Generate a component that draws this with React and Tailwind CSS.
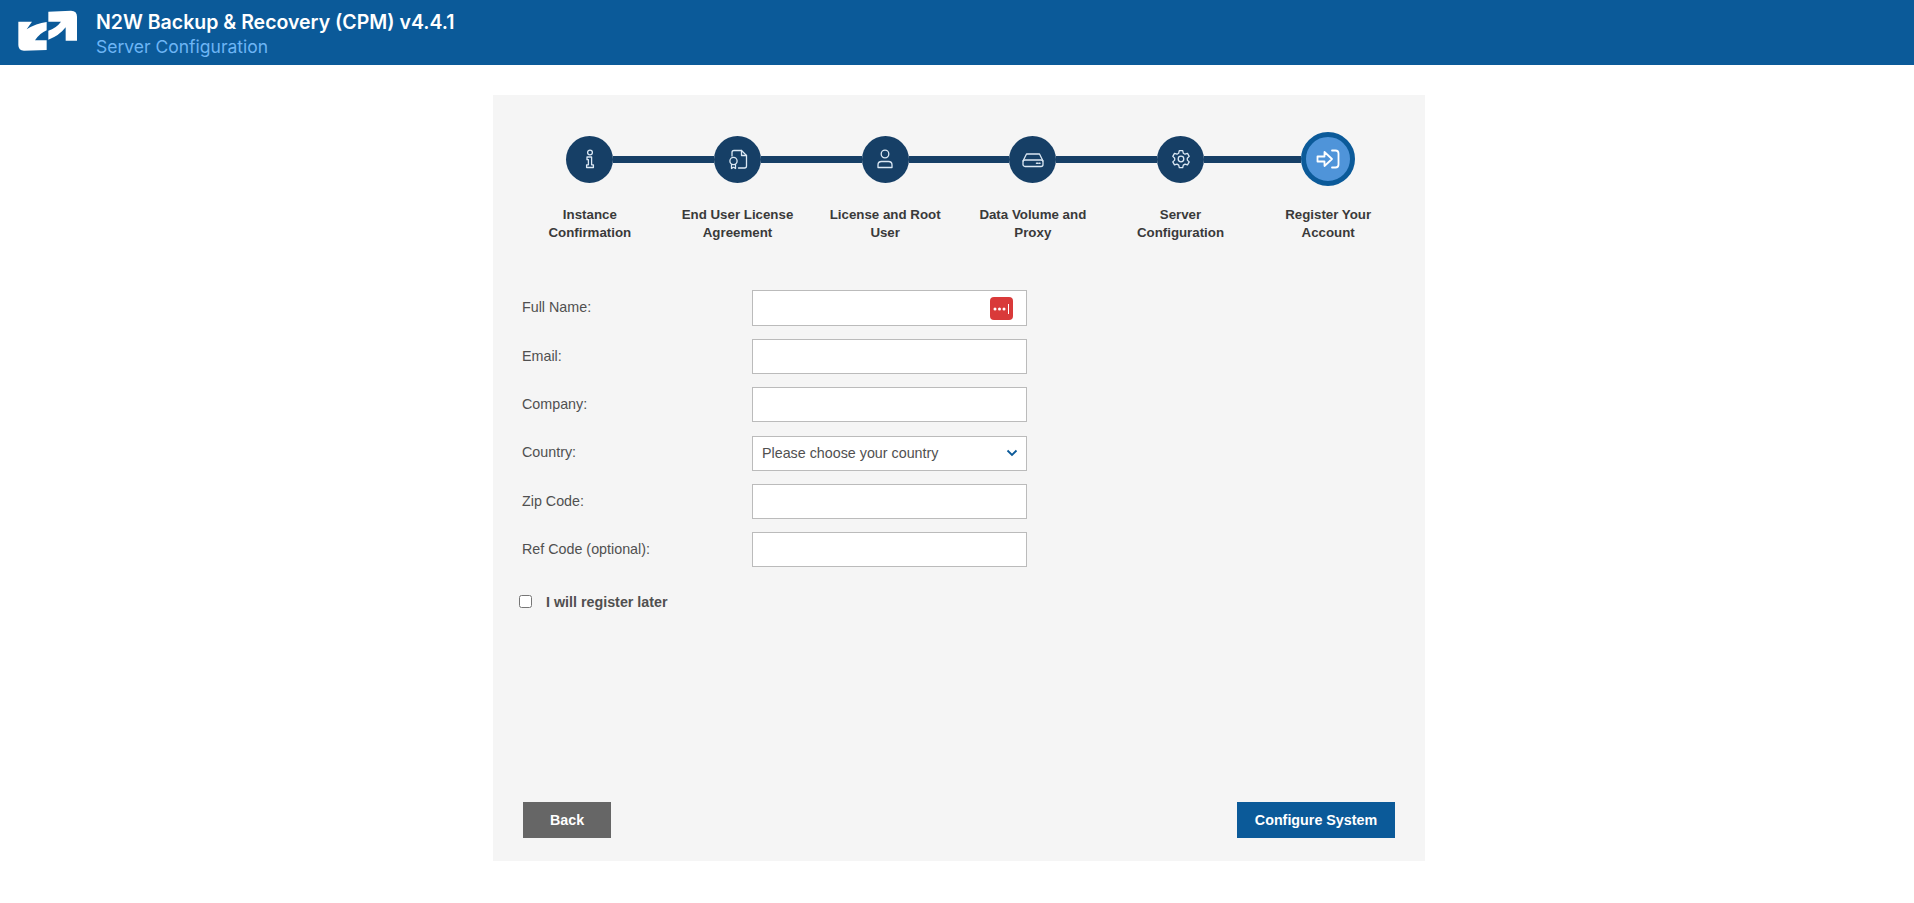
import React from "react";

const steps = [
  { label: ["Instance", "Confirmation"], icon: "info" },
  { label: ["End User License", "Agreement"], icon: "doc" },
  { label: ["License and Root", "User"], icon: "user" },
  { label: ["Data Volume and", "Proxy"], icon: "drive" },
  { label: ["Server", "Configuration"], icon: "gear" },
  { label: ["Register Your", "Account"], icon: "login" },
];

function StepIcon({ name }) {
  const common = { fill: "none", stroke: "#dbe8f4", strokeWidth: 1.3, strokeLinecap: "round", strokeLinejoin: "round" };
  if (name === "info")
    return (
      <svg width="24" height="24" viewBox="0 0 24 24" {...common}>
        <circle cx="12" cy="5.500" r="2.400" />
        <path d="M9 10h4.600v7.800H15.400v2.700H8.600v-2.700h1.800v-5.100H9z" />
      </svg>
    );
  if (name === "doc")
    return (
      <svg width="24" height="24" viewBox="0 0 24 24" {...common}>
        <path d="M6 9V5.500q0-2 2-2h7.500l5 5v10.500q0 2-2 2h-6" />
        <path d="M15.500 3.500v5h5" />
        <circle cx="7.500" cy="14" r="3.600" />
        <path d="M5.500 17.500v4l2-1.200 2 1.200v-4" />
      </svg>
    );
  if (name === "user")
    return (
      <svg width="24" height="24" viewBox="0 0 24 24" {...common}>
        <circle cx="12" cy="7" r="3.800" />
        <path d="M5 20.500v-2.500q0-3.500 3.500-3.500h7q3.500 0 3.500 3.500v2.500z" />
      </svg>
    );
  if (name === "drive")
    return (
      <svg width="24" height="24" viewBox="0 0 24 24" {...common}>
        <path d="M2 14l3.500-7h13l3.500 7" />
        <rect x="2" y="13" width="20" height="6.500" rx="2" />
        <path d="M15.500 16.300h1.500M18.300 16.300h.7" strokeWidth="1.500" />
      </svg>
    );
  if (name === "gear")
    return (
      <svg width="24" height="24" viewBox="0 0 24 24" {...common}>
        <path d="M10.300 3.600h3.400l.6 2.600 1.700 1 2.500-.8 1.700 3-1.900 1.800v1.900l1.900 1.800-1.700 3-2.500-.8-1.700 1-.6 2.600h-3.400l-.6-2.600-1.700-1-2.500.8-1.700-3 1.900-1.800v-1.900l-1.900-1.800 1.700-3 2.500.8 1.700-1z" />
        <circle cx="12" cy="12" r="2.800" />
      </svg>
    );
  return (
    <svg width="26" height="26" viewBox="0 0 26 26" fill="none" stroke="#ffffff" strokeWidth="1.800" strokeLinecap="round" strokeLinejoin="round">
      <path d="M2.500 10.500h7v-4.500l7.500 7-7.500 7v-4.500h-7z" />
      <path d="M17 4.500h3.500q3 0 3 3v11q0 3-3 3h-3.500" />
    </svg>
  );
}

function Step({ step, index }) {
  const last = step.icon === "login";
  return (
    <div className="flex flex-col items-center">
      <div className="flex h-[54px] w-full items-center">
        <div className={index === 0 ? "h-[7px] flex-1" : "h-[7px] flex-1 bg-[#163f66]"} />
        {last ? (
          <div className="flex h-[54px] w-[54px] items-center justify-center rounded-full border-[5px] border-[#0b5a99] bg-[#4f94d9]">
            <StepIcon name={step.icon} />
          </div>
        ) : (
          <div className="flex h-[47px] w-[47px] items-center justify-center rounded-full bg-[#163f66]">
            <StepIcon name={step.icon} />
          </div>
        )}
        <div className={last ? "h-[7px] flex-1" : "h-[7px] flex-1 bg-[#163f66]"} />
      </div>
      <div className="mt-[20px] text-center text-[13.300px] font-bold leading-[18px] text-[#3a3a3a]">
        {step.label[0]}
        <br />
        {step.label[1]}
      </div>
    </div>
  );
}

function Field({ label, tall, children }) {
  return (
    <div className={tall ? "flex h-[36px] items-center" : "flex h-[35px] items-center"}>
      <label className="w-[230px] text-[14.300px] text-[#505050]">{label}</label>
      {children}
    </div>
  );
}

const inputBase = "w-[275px] border border-[#bbbbbb] bg-white px-[9px] text-[14.300px] text-[#505050] outline-none";
const inputClass = "h-[35px] " + inputBase;

export default function App() {
  return (
    <div className="min-h-[903px] bg-white font-['Liberation_Sans',Arial,sans-serif]">
      <header className="flex h-[65px] items-center bg-[#0b5a99]">
        <svg className="ml-[18px] mb-[3px]" width="60" height="42" viewBox="54 30 180 126" fill="#ffffff">
          <path d="M145 35L213 32Q231 32 231 50L231 122L197 122L197 82Q177 108 145 119L145 92Q168 85 183 65L145 65Z" />
          <path d="M140 150L72 152Q55 152 55 135L55 65L96 65L80 88Q108 70 140 66L140 91Q120 99 105 121L140 121Z" />
        </svg>
        <div className="ml-[18px] pt-[3px] font-['Inter',sans-serif]">
          <div className="text-[19.500px] font-semibold leading-[25px] text-white">N2W Backup &amp; Recovery (CPM) v4.4.1</div>
          <div className="text-[17.500px] leading-[24px] text-[#6db5f5]">Server Configuration</div>
        </div>
      </header>

      <main className="flex justify-center pl-[4px] pt-[30px]">
        <div className="flex h-[766px] w-[932px] flex-col bg-[#f5f5f5]">
          <div className="grid grid-cols-6 px-[23px] pt-[37px]">
            {steps.map((s, i) => (
              <Step key={s.icon} step={s} index={i} />
            ))}
          </div>

          <form className="mt-[48px] flex flex-1 flex-col px-[29px]">
            <div className="flex flex-col gap-[13.200px]">
              <Field label="Full Name:" tall>
                <div className="relative">
                  <input className={"h-[36px] " + inputBase} />
                  <span className="absolute right-[14px] top-[7px] flex h-[23px] w-[23px] items-center justify-center rounded-[4px] bg-[#d93a3a]">
                    <svg width="19" height="10" viewBox="0 0 19 10" fill="#ffffff">
                      <circle cx="3" cy="5" r="1.500" />
                      <circle cx="7.500" cy="5" r="1.500" />
                      <circle cx="12" cy="5" r="1.500" />
                      <rect x="16" y="0" width="1" height="10" />
                    </svg>
                  </span>
                </div>
              </Field>
              <Field label="Email:"><input className={inputClass} /></Field>
              <Field label="Company:"><input className={inputClass} /></Field>
              <Field label="Country:">
                <div className={inputClass + " flex items-center justify-between"}>
                  <span className="pt-[1px]">Please choose your country</span>
                  <svg className="mr-[-1px]" width="12" height="8" viewBox="0 0 12 8" fill="none" stroke="#0b5a99" strokeWidth="1.800">
                    <path d="M1.500 1.500L6 6l4.500-4.500" />
                  </svg>
                </div>
              </Field>
              <Field label="Zip Code:"><input className={inputClass} /></Field>
              <Field label="Ref Code (optional):"><input className={inputClass} /></Field>
            </div>

            <label className="mt-[25px] flex items-center">
              <input type="checkbox" className="m-0 ml-[-3px] mt-[-3px] h-[13px] w-[13px]" />
              <span className="ml-[14px] text-[14.300px] font-bold text-[#505050]">I will register later</span>
            </label>

            <div className="mt-auto mb-[23px] flex justify-between pl-[1px] pr-[1px]">
              <button type="button" className="h-[36px] w-[88px] bg-[#666666] pt-[1px] text-[14.300px] font-bold text-white">Back</button>
              <button type="button" className="h-[36px] w-[158px] bg-[#0b5a99] pt-[1px] text-[14.300px] font-bold text-white">Configure System</button>
            </div>
          </form>
        </div>
      </main>
    </div>
  );
}
